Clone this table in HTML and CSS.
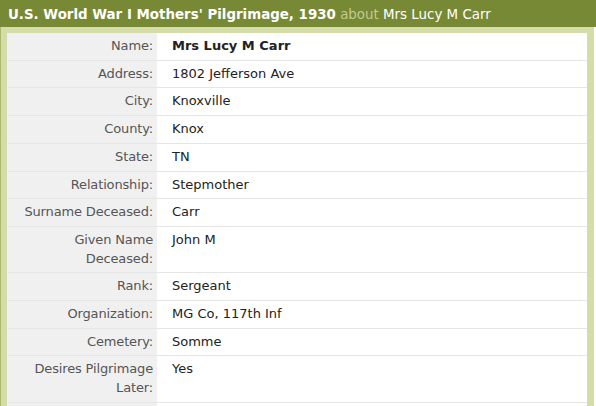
FILE: index.html
```html
<!DOCTYPE html>
<html>
<head>
<meta charset="utf-8">
<link rel="stylesheet" href="styles.css">
</head>
<body>
<div class="header"><span class="title">U.S. World War I Mothers' Pilgrimage, 1930</span> <span class="about">about</span> <span class="person">Mrs Lucy M Carr</span></div>
<div class="frame">
<table class="record">
<tr><th>Name:</th><td><b>Mrs Lucy M Carr</b></td></tr>
<tr><th>Address:</th><td>1802 Jefferson Ave</td></tr>
<tr><th>City:</th><td>Knoxville</td></tr>
<tr><th>County:</th><td>Knox</td></tr>
<tr><th>State:</th><td>TN</td></tr>
<tr><th>Relationship:</th><td>Stepmother</td></tr>
<tr><th>Surname Deceased:</th><td>Carr</td></tr>
<tr><th>Given Name Deceased:</th><td>John M</td></tr>
<tr><th>Rank:</th><td>Sergeant</td></tr>
<tr><th>Organization:</th><td>MG Co, 117th Inf</td></tr>
<tr><th>Cemetery:</th><td>Somme</td></tr>
<tr><th>Desires Pilgrimage Later:</th><td>Yes</td></tr>
<tr><th>&nbsp;</th><td>&nbsp;</td></tr>
</table>
</div>
</body>
</html>
```

FILE: styles.css
```css
html, body {
  margin: 0;
  padding: 0;
  background: #ffffff;
  font-family: "DejaVu Sans", Verdana, sans-serif;
  font-size: 13px;
}
body {
  height: 406px;
  overflow: hidden;
}
.header {
  background: #788935;
  height: 27px;
  line-height: 29px;
  padding-left: 8px;
  color: #ffffff;
  font-size: 13.4px;
  white-space: nowrap;
  overflow: hidden;
}
.title { font-weight: bold; }
.about { color: #c3cc8f; }
.frame {
  background: #d4dca8;
  border-left: 1px solid #aab96c;
  margin-right: 2px;
  padding: 6px 7px 0 6px;
  height: 373px;
  overflow: hidden;
}
.record {
  width: 100%;
  border-collapse: collapse;
  background: #ffffff;
}
.record th, .record td {
  padding: 4px 0;
  line-height: 18.7px;
  border-bottom: 1px solid #e6e6e6;
  vertical-align: top;
}
.record th {
  width: 146px;
  background: #f0f0f0;
  color: #555555;
  font-weight: normal;
  text-align: right;
  padding-right: 4px;
  letter-spacing: -0.15px;
  border-right: 1px solid #ffffff;
}
.record td {
  color: #222222;
  padding-left: 14px;
}
```
